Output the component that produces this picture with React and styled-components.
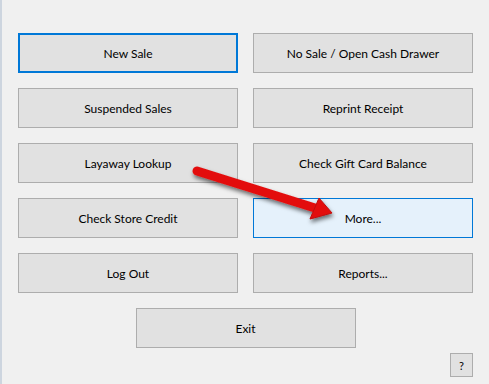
import styled, { createGlobalStyle } from "styled-components";

const GlobalStyle = createGlobalStyle`
  html, body {
    margin: 0;
    padding: 0;
    background: #f0f0f0;
  }
  * {
    box-sizing: border-box;
  }
`;

const StyledWindow = styled.div`
  position: relative;
  width: 489px;
  height: 384px;
  background: #f0f0f0;
  border-left: 2px solid #cdd5df;
  padding: 33px 16px 0 16px;
  font-family: Lato, "Noto Sans", sans-serif;
  font-size: 12px;
  color: #000;
  overflow: hidden;
`;

const StyledGrid = styled.div`
  display: grid;
  grid-template-columns: 220px 220px;
  grid-auto-rows: 40px;
  column-gap: 15px;
  row-gap: 15px;
`;

const StyledButton = styled.button`
  width: 220px;
  height: 40px;
  display: flex;
  align-items: center;
  justify-content: center;
  font: inherit;
  color: #000;
  background: ${(p) => (p.$hover ? "#e5f1fb" : "#e1e1e1")};
  border: ${(p) =>
    p.$focused ? "2px solid #0078d7" : p.$hover ? "1px solid #0078d7" : "1px solid #adadad"};
  padding: 1px 0 0 0;
  margin: 0;
  cursor: default;
`;

const StyledExitRow = styled.div`
  display: flex;
  justify-content: center;
  width: 455px;
  margin-top: 15px;
`;

const StyledHelpRow = styled.div`
  display: flex;
  justify-content: flex-end;
  width: 455px;
  margin-top: 5px;
`;

const StyledHelp = styled.button`
  width: 23px;
  height: 24px;
  font: inherit;
  font-size: 11px;
  color: #000;
  background: #e1e1e1;
  border: 1px solid #adadad;
  padding: 0;
  margin: 0;
`;

const StyledArrow = styled.svg`
  position: absolute;
  left: 0;
  top: 0;
  pointer-events: none;
`;

const buttons = [
  { id: 1, label: "New Sale", focused: true },
  { id: 2, label: "No Sale / Open Cash Drawer" },
  { id: 3, label: "Suspended Sales" },
  { id: 4, label: "Reprint Receipt" },
  { id: 5, label: "Layaway Lookup" },
  { id: 6, label: "Check Gift Card Balance" },
  { id: 7, label: "Check Store Credit" },
  { id: 8, label: "More...", hover: true },
  { id: 9, label: "Log Out" },
  { id: 10, label: "Reports..." },
];

function Arrow() {
  return (
    <StyledArrow width="489" height="384" viewBox="0 0 489 384">
      <defs>
        <filter id="shadow" x="-20%" y="-50%" width="140%" height="200%">
          <feDropShadow dx="1" dy="3" stdDeviation="2" floodColor="#000" floodOpacity="0.55" />
        </filter>
      </defs>
      <g filter="url(#shadow)">
        <line
          x1="195"
          y1="171"
          x2="313"
          y2="208"
          stroke="#e3100f"
          strokeWidth="9"
          strokeLinecap="round"
        />
        <polygon points="317,198 308,219 330,213" fill="#e3100f" stroke="#c00a0a" strokeWidth="1" strokeLinejoin="round" />
      </g>
    </StyledArrow>
  );
}

function App() {
  return (
    <>
      <GlobalStyle />
      <StyledWindow>
        <StyledGrid>
          {buttons.map((b) => (
            <StyledButton key={b.id} $focused={b.focused} $hover={b.hover}>
              {b.label}
            </StyledButton>
          ))}
        </StyledGrid>
        <StyledExitRow>
          <StyledButton>Exit</StyledButton>
        </StyledExitRow>
        <StyledHelpRow>
          <StyledHelp>?</StyledHelp>
        </StyledHelpRow>
        <Arrow />
      </StyledWindow>
    </>
  );
}

export default App;
